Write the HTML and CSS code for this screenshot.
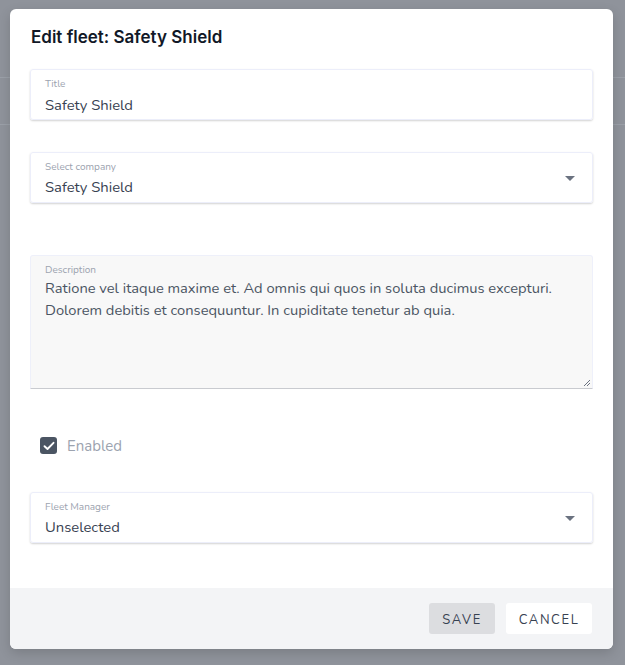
FILE: index.html
```html
<!DOCTYPE html>
<html>
<head>
<meta charset="utf-8">
<link rel="stylesheet" href="styles.css">
</head>
<body>
<div class="backdrop">
  <div class="modal">
    <h1 class="modal-title">Edit fleet: Safety Shield</h1>
    <div class="modal-body">
      <div class="field field-title">
        <div class="label">Title</div>
        <div class="value">Safety Shield</div>
      </div>
      <div class="field field-select">
        <div class="label">Select company</div>
        <div class="value">Safety Shield</div>
        <span class="caret"></span>
      </div>
      <div class="textarea">
        <div class="label">Description</div>
        <div class="text">Ratione vel itaque maxime et. Ad omnis qui quos in soluta ducimus excepturi. Dolorem debitis et consequuntur. In cupiditate tenetur ab quia.</div>
        <svg class="grip" width="9" height="9" viewBox="0 0 9 9"><path d="M8 2 L2 8 M8 5 L5 8" stroke="#6b7280" stroke-width="1"/></svg>
      </div>
      <label class="check">
        <span class="box"><svg width="12" height="10" viewBox="0 0 12 10"><path d="M1.5 5.2 L4.5 8 L10.5 1.8" fill="none" stroke="#fff" stroke-width="1.9" stroke-linecap="round" stroke-linejoin="round"/></svg></span>
        <span class="check-label">Enabled</span>
      </label>
      <div class="field field-manager">
        <div class="label">Fleet Manager</div>
        <div class="value">Unselected</div>
        <span class="caret"></span>
      </div>
    </div>
    <div class="modal-footer">
      <button class="btn btn-save">SAVE</button>
      <button class="btn btn-cancel">CANCEL</button>
    </div>
  </div>
</div>
</body>
</html>
```
FILE: styles.css
```css
html, body {
  margin: 0;
  padding: 0;
}
body {
  background-color: #8f939b;
  background-image: linear-gradient(#9ba0a8, #9ba0a8), linear-gradient(#9ba0a8, #9ba0a8);
  background-size: 100% 1px, 100% 1px;
  background-position: 0 77px, 0 124px;
  background-repeat: no-repeat;
  width: 625px;
  height: 665px;
  font-family: "Nunito", "Lato", "Noto Sans", sans-serif;
  overflow: hidden;
}
.backdrop {
  padding: 9px 12px 0 10px;
}
.modal {
  width: 603px;
  height: 640px;
  background: #fff;
  border-radius: 6px;
  overflow: hidden;
  display: flex;
  flex-direction: column;
  box-shadow: 0 4px 12px rgba(0,0,0,0.15);
}
.modal-title {
  margin: 0;
  padding: 17px 21px 0 21px;
  height: 42px;
  font-family: "Inter", "Liberation Sans", sans-serif;
  font-size: 17px;
  font-weight: 600;
  line-height: 22px;
  color: #111827;
}
.modal-body {
  flex: 1;
  padding: 0 20px;
}
.field {
  position: relative;
  height: 49px;
  border: 1px solid #eceefa;
  border-radius: 3px;
  box-shadow: 0 1px 2px rgba(0,0,0,0.18);
  padding: 0 14px;
}
.field-title { margin-top: 1px; }
.field-title .value { margin-top: 5px; }
.field-select { margin-top: 32px; }
.field-manager { margin-top: 38px; }
.label {
  font-size: 10px;
  line-height: 12px;
  color: #9ca3af;
  padding-top: 8px;
}
.value {
  font-size: 14.8px;
  line-height: 20px;
  color: #374151;
  margin-top: 4px;
}
.caret {
  position: absolute;
  right: 17px;
  top: 23px;
  width: 0;
  height: 0;
  border-left: 5px solid transparent;
  border-right: 5px solid transparent;
  border-top: 5px solid #6b7280;
}
.textarea {
  position: relative;
  margin-top: 52px;
  height: 132px;
  background: #f8f8f8;
  border: 1px solid #eef0fa;
  border-bottom: 1px solid #c9cbd0;
  border-radius: 3px 3px 0 0;
  padding: 0 14px;
}
.textarea .label {
  padding-top: 8px;
}
.textarea .text {
  font-size: 14.7px;
  line-height: 22px;
  color: #4b5563;
  margin-top: 1px;
}
.grip {
  position: absolute;
  right: 1px;
  bottom: 1px;
}
.check {
  display: flex;
  align-items: center;
  margin-top: 48px;
  padding-left: 10px;
  height: 17px;
}
.box {
  width: 17px;
  height: 17px;
  border-radius: 3px;
  background: #4b5563;
  display: flex;
  align-items: center;
  justify-content: center;
}
.check-label {
  margin-left: 10px;
  font-size: 15px;
  line-height: 17px;
  padding-top: 2px;
  color: #9ca3af;
}
.modal-footer {
  height: 61px;
  background: #f3f4f6;
  display: flex;
  align-items: center;
  justify-content: flex-end;
  padding-right: 21px;
  gap: 11px;
}
.btn {
  height: 31px;
  border: none;
  border-radius: 3px;
  font-family: "Nunito", "Lato", "Noto Sans", sans-serif;
  font-size: 13px;
  letter-spacing: 1.6px;
  color: #374151;
  padding: 2px 0 0 0;
}
.btn-save {
  width: 66px;
  background: #dcdde0;
}
.btn-cancel {
  width: 86px;
  background: #fff;
}
```
